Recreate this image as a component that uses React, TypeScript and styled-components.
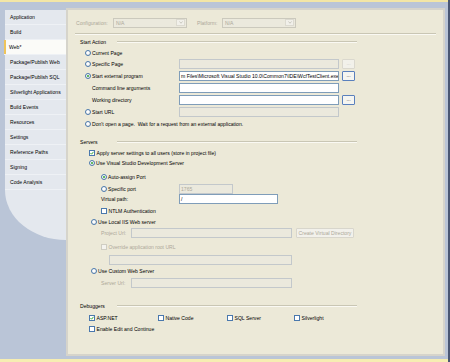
import React from 'react';
import styled, { createGlobalStyle } from 'styled-components';

const GlobalStyle = createGlobalStyle`
  html, body {
    margin: 0;
    padding: 0;
  }
  body {
    font-family: "Liberation Sans", Arial, sans-serif;
    font-size: 5.1px;
    color: #000;
  }
`;

const DISABLED = '#aca899';

const Frame = styled.div`
  width: 450px;
  height: 362px;
  box-sizing: border-box;
  display: flex;
  flex-direction: column;
  background: #bac5d7;
  border-right: 2px solid #4a5773;
  overflow: hidden;
`;

const TopStrip = styled.div`
  height: 2px;
  flex-shrink: 0;
  background: #f3e6a6;
`;

const BottomStrip = styled.div`
  height: 3px;
  flex-shrink: 0;
  background: #f6edb2;
`;

const Body = styled.div`
  flex: 1;
  min-height: 0;
  display: flex;
  padding: 6px 3px 3px 0;
`;

const TabColumn = styled.div`
  width: 66px;
  flex-shrink: 0;
  display: flex;
  flex-direction: column;
  padding: 2px 0 0 5px;
  box-sizing: border-box;
`;

const Tab = styled.div<{ $active?: boolean }>`
  height: 14px;
  flex-shrink: 0;
  display: flex;
  align-items: center;
  padding-left: 5px;
  border-bottom: 1px solid #eef1f5;
  background: ${p => (p.$active ? '#fbfbf8' : '#e4e8ee')};
  box-shadow: ${p => (p.$active ? 'inset 2px 0 0 #efc45a' : 'none')};
  margin-left: ${p => (p.$active ? '-1px' : '0')};
  white-space: nowrap;
`;

const TabTail = styled.div`
  height: 50px;
  background: #e4e8ee;
  border-bottom-left-radius: 61px 50px;
`;

const Panel = styled.div`
  flex: 1;
  display: flex;
  flex-direction: column;
  padding-top: 6px;
  background: #ece9d8;
  border: 2px solid #d6d4cb;
`;

const Row = styled.div<{ $h: number; $indent?: number; $mt?: number }>`
  height: ${p => p.$h}px;
  flex-shrink: 0;
  display: flex;
  align-items: center;
  padding-left: ${p => p.$indent ?? 0}px;
  margin-top: ${p => p.$mt ?? 0}px;
  white-space: nowrap;
`;

const Label = styled.div<{ $w?: number; $disabled?: boolean }>`
  width: ${p => (p.$w ? `${p.$w}px` : 'auto')};
  flex-shrink: 0;
  color: ${p => (p.$disabled ? DISABLED : '#000')};
`;

const Radio = styled.span<{ $checked?: boolean }>`
  width: 6px;
  height: 6px;
  flex-shrink: 0;
  box-sizing: border-box;
  margin-right: 1px;
  position: relative;
  border-radius: 50%;
  border: 1px solid #4a78ad;
  background: radial-gradient(circle at 40% 40%, #ffffff 30%, #dcdcd4 100%);

  &::after {
    content: '';
    display: ${p => (p.$checked ? 'block' : 'none')};
    position: absolute;
    inset: 1px;
    border-radius: 50%;
    background: #2ea42e;
  }
`;

const Check = styled.span<{ $disabled?: boolean }>`
  width: 6px;
  height: 6px;
  flex-shrink: 0;
  box-sizing: border-box;
  margin-right: 1.5px;
  display: flex;
  align-items: center;
  justify-content: center;
  border: 1px solid ${p => (p.$disabled ? '#cfcdc2' : '#4a78ad')};
  background: ${p => (p.$disabled ? '#f4f3ee' : '#ffffff')};
`;

const Field = styled.div<{ $w: number; $disabled?: boolean }>`
  width: ${p => p.$w}px;
  height: 10px;
  flex-shrink: 0;
  box-sizing: border-box;
  display: flex;
  align-items: center;
  padding: 0 1px;
  overflow: hidden;
  border: 1px solid ${p => (p.$disabled ? '#c3c8cb' : '#7f9db9')};
  background: ${p => (p.$disabled ? '#ebe9dd' : '#ffffff')};
  color: ${p => (p.$disabled ? DISABLED : '#000')};
`;

const Browse = styled.div<{ $disabled?: boolean }>`
  width: 13px;
  height: 10px;
  margin-left: 3px;
  flex-shrink: 0;
  box-sizing: border-box;
  display: flex;
  align-items: center;
  justify-content: center;
  border: 1px solid ${p => (p.$disabled ? '#dad8ce' : '#5a80bd')};
  border-radius: 1px;
  background: ${p => (p.$disabled ? '#f2f1ea' : '#f5f5f1')};
  color: ${p => (p.$disabled ? '#c8c6bb' : '#222')};
  line-height: 1;
`;

const CommandButton = styled.div`
  width: 58px;
  height: 10px;
  margin-left: 4px;
  flex-shrink: 0;
  box-sizing: border-box;
  display: flex;
  align-items: center;
  justify-content: center;
  border: 1px solid #d8d6cc;
  border-radius: 1px;
  background: #f2f1eb;
  color: ${DISABLED};
`;

const Combo = styled.div`
  width: 74px;
  height: 10px;
  flex-shrink: 0;
  box-sizing: border-box;
  display: flex;
  align-items: center;
  padding: 0 1px 0 2px;
  border: 1px solid #cbc9bd;
  background: #ebe9dd;
  color: ${DISABLED};
`;

const ComboArrow = styled.span`
  margin-left: auto;
  width: 9px;
  height: 7px;
  box-sizing: border-box;
  display: flex;
  align-items: center;
  justify-content: center;
  border: 1px solid #dcdad0;
  background: #f1f0ea;
`;

const Divider = styled.div`
  margin: 4px 7px 0;
  flex-shrink: 0;
  border-top: 1px solid #c9c6b4;
  border-bottom: 1px solid #faf9f3;
`;

const HeadingLine = styled.div`
  width: 240px;
  border-top: 1px solid #c9c6b4;
  border-bottom: 1px solid #faf9f3;
`;

const CheckItem = styled.div<{ $w?: number }>`
  width: ${p => (p.$w ? `${p.$w}px` : 'auto')};
  display: flex;
  align-items: center;
  flex-shrink: 0;
`;

const Tick = () => (
  <svg width="4" height="4" viewBox="0 0 8 8">
    <path d="M1 4.2 L3.2 6.4 L7 1.6" stroke="#22a022" strokeWidth="1.8" fill="none" />
  </svg>
);

const Chevron = () => (
  <svg width="4" height="3" viewBox="0 0 8 6">
    <path d="M1 1 L4 4.5 L7 1" stroke="#b8b6aa" strokeWidth="1.4" fill="none" />
  </svg>
);

const Heading = ({ children, mt }: { children: React.ReactNode; mt?: number }) => (
  <Row $h={13} $indent={12} $mt={mt}>
    <Label $w={37}>{children}</Label>
    <HeadingLine />
  </Row>
);

const tabs = [
  'Application',
  'Build',
  'Web*',
  'Package/Publish Web',
  'Package/Publish SQL',
  'Silverlight Applications',
  'Build Events',
  'Resources',
  'Settings',
  'Reference Paths',
  'Signing',
  'Code Analysis',
];

export default function App() {
  return (
    <>
      <GlobalStyle />
      <Frame>
        <TopStrip />
        <Body>
          <TabColumn>
            {tabs.map(t => (
              <Tab key={t} $active={t === 'Web*'}>
                {t}
              </Tab>
            ))}
            <TabTail />
          </TabColumn>

          <Panel>
            <Row $h={13} $indent={8}>
              <Label $w={37} $disabled>Configuration:</Label>
              <Combo>
                N/A
                <ComboArrow><Chevron /></ComboArrow>
              </Combo>
              <Label $w={25} $disabled style={{ marginLeft: 10 }}>Platform:</Label>
              <Combo>
                N/A
                <ComboArrow><Chevron /></ComboArrow>
              </Combo>
            </Row>
            <Divider />

            <Heading>Start Action</Heading>
            <Row $h={10} $indent={17}>
              <Radio />
              <Label>Current Page</Label>
            </Row>
            <Row $h={12} $indent={17}>
              <Radio />
              <Label $w={87}>Specific Page</Label>
              <Field $w={160} $disabled />
              <Browse $disabled>...</Browse>
            </Row>
            <Row $h={12} $indent={17}>
              <Radio $checked />
              <Label $w={87}>Start external program</Label>
              <Field $w={160}>
                m Files\Microsoft Visual Studio 10.0\Common7\IDE\WcfTestClient.exe
              </Field>
              <Browse>...</Browse>
            </Row>
            <Row $h={12} $indent={24}>
              <Label $w={87}>Command line arguments</Label>
              <Field $w={160} />
            </Row>
            <Row $h={12} $indent={24}>
              <Label $w={87}>Working directory</Label>
              <Field $w={160} />
              <Browse>...</Browse>
            </Row>
            <Row $h={12} $indent={17}>
              <Radio />
              <Label $w={87}>Start URL</Label>
              <Field $w={160} $disabled />
            </Row>
            <Row $h={11} $indent={17}>
              <Radio />
              <Label>Don't open a page.{'\u00a0\u00a0'}Wait for a request from an external application.</Label>
            </Row>

            <Heading mt={6}>Servers</Heading>
            <Row $h={9} $indent={21}>
              <Check><Tick /></Check>
              <Label>Apply server settings to all users (store in project file)</Label>
            </Row>
            <Row $h={12} $indent={21}>
              <Radio $checked />
              <Label>Use Visual Studio Development Server</Label>
            </Row>
            <Row $h={15} $indent={33}>
              <Radio $checked />
              <Label>Auto-assign Port</Label>
            </Row>
            <Row $h={9} $indent={33}>
              <Radio />
              <Label $w={71}>Specific port</Label>
              <Field $w={54} $disabled>1765</Field>
            </Row>
            <Row $h={12} $indent={33}>
              <Label $w={78}>Virtual path:</Label>
              <Field $w={99}>/</Field>
            </Row>
            <Row $h={11} $indent={33}>
              <Check />
              <Label>NTLM Authentication</Label>
            </Row>
            <Row $h={11} $indent={23}>
              <Radio />
              <Label>Use Local IIS Web server</Label>
            </Row>
            <Row $h={12} $indent={33}>
              <Label $w={30} $disabled>Project Url:</Label>
              <Field $w={161} $disabled />
              <CommandButton>Create Virtual Directory</CommandButton>
            </Row>
            <Row $h={15} $indent={33}>
              <Check $disabled />
              <Label $disabled>Override application root URL</Label>
            </Row>
            <Row $h={11} $indent={41}>
              <Field $w={183} $disabled />
            </Row>
            <Row $h={12} $indent={23}>
              <Radio />
              <Label>Use Custom Web Server</Label>
            </Row>
            <Row $h={12} $indent={33}>
              <Label $w={30} $disabled>Server Url:</Label>
              <Field $w={161} $disabled />
            </Row>

            <Heading mt={10}>Debuggers</Heading>
            <Row $h={12} $indent={21}>
              <CheckItem $w={69}>
                <Check><Tick /></Check>
                <Label>ASP.NET</Label>
              </CheckItem>
              <CheckItem $w={69}>
                <Check />
                <Label>Native Code</Label>
              </CheckItem>
              <CheckItem $w={67}>
                <Check />
                <Label>SQL Server</Label>
              </CheckItem>
              <CheckItem>
                <Check />
                <Label>Silverlight</Label>
              </CheckItem>
            </Row>
            <Row $h={10} $indent={21}>
              <Check />
              <Label>Enable Edit and Continue</Label>
            </Row>
          </Panel>
        </Body>
        <BottomStrip />
      </Frame>
    </>
  );
}
